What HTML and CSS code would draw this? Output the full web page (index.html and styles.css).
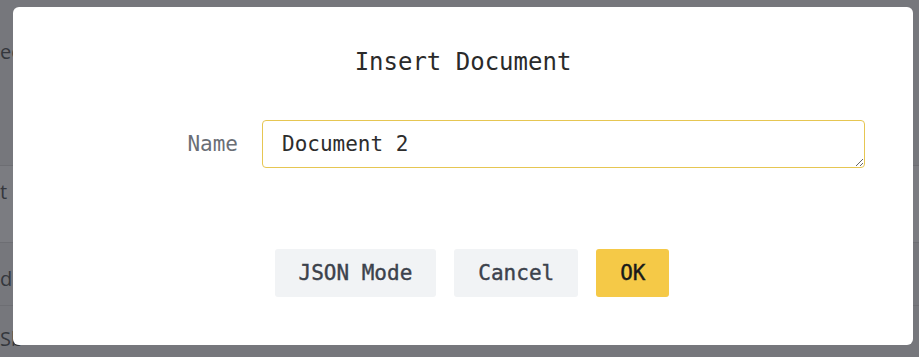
FILE: index.html
```html
<!DOCTYPE html>
<html lang="en">
<head>
  <meta charset="UTF-8">
  <title>Insert Document</title>
  <link rel="stylesheet" href="styles.css">
</head>
<body>

  <div class="page">
    <div class="page-head">ee</div>
    <div class="page-row row-light">t</div>
    <div class="page-row">d</div>
    <div class="page-row row-last">Sb</div>
  </div>

  <div class="overlay">
    <div class="modal">
      <h2 class="modal-title">Insert Document</h2>

      <div class="form-row">
        <label class="form-label" for="docName">Name</label>
        <textarea id="docName" class="form-input" rows="1">Document 2</textarea>
      </div>

      <div class="modal-actions">
        <button class="btn btn-gray">JSON Mode</button>
        <button class="btn btn-gray">Cancel</button>
        <button class="btn btn-yellow">OK</button>
      </div>
    </div>
  </div>

</body>
</html>
```

FILE: styles.css
```css
body {
  margin: 0;
  background-color: #76777c;
  font-family: "DejaVu Sans Mono", monospace;
  overflow: hidden;
}

/* page behind the dialog, only its edge shows */
.page {
  font-family: "Open Sans", sans-serif;
  font-size: 20px;
  line-height: 24px;
  color: #34373d;
}

.page-head {
  height: 165px;
  padding-top: 40px;
  box-sizing: border-box;
}

.page-row {
  height: 63px;
  box-sizing: border-box;
  padding-top: 24px;
  border-top: 1px solid #6d6e73;
}

.row-light {
  height: 77px;
  padding-top: 14px;
  background-color: #7b7c81;
}

.row-last {
  padding-top: 21px;
}

/* dialog */
.overlay {
  position: fixed;
  inset: 0;
  padding: 7px 0 0 13px;
}

.modal {
  width: 900px;
  height: 338px;
  box-sizing: border-box;
  background-color: #fff;
  border-radius: 6px;
  padding: 40px 48px 48px;
}

.modal-title {
  margin: 0;
  font-size: 24px;
  line-height: 30px;
  font-weight: normal;
  text-align: center;
  color: #2a2a2a;
}

.form-row {
  display: flex;
  align-items: center;
  gap: 24px;
  margin-top: 43px;
}

.form-label {
  width: 177px;
  text-align: right;
  font-size: 21px;
  color: #6a6e75;
}

.form-input {
  flex: 1;
  height: 48px;
  box-sizing: border-box;
  border: 1px solid #e6c652;
  border-radius: 4px;
  padding: 11px 19px;
  font-family: "DejaVu Sans Mono", monospace;
  font-size: 21px;
  line-height: 24px;
  color: #2d2d2d;
  resize: vertical;
  outline: none;
}

.modal-actions {
  display: flex;
  justify-content: center;
  gap: 18px;
  margin-top: 81px;
  padding-left: 18px;
}

.btn {
  height: 48px;
  padding: 0 24px;
  border: none;
  border-radius: 3px;
  font-family: "DejaVu Sans Mono", monospace;
  font-size: 21px;
  -webkit-text-stroke: 0.4px currentColor;
  cursor: pointer;
}

.btn-gray {
  background-color: #f1f3f5;
  color: #3c424c;
}

.btn-yellow {
  background-color: #f5c947;
  color: #1a1a1a;
}
```
